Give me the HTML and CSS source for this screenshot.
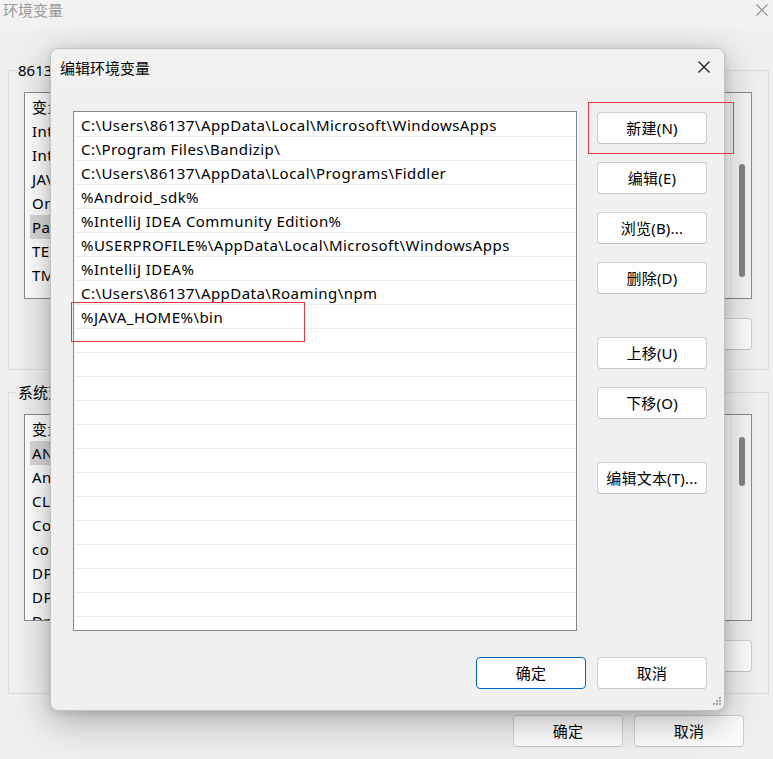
FILE: index.html
```html
<!DOCTYPE html>
<html lang="zh-CN">
<head>
<meta charset="utf-8">
<title>编辑环境变量</title>
<link rel="stylesheet" href="styles.css">
</head>
<body>
<div class="win">
  <div class="win-title">
    <span class="win-title-text">环境变量</span>
    <svg class="win-close" width="12" height="12" viewBox="0 0 12 12"><path d="M0.5 0.5 L11.5 11.5 M11.5 0.5 L0.5 11.5" stroke="#8a8a8a" stroke-width="1.1" fill="none"/></svg>
  </div>

  <div class="group group-user">
    <div class="legend">86137 的用户变量(U)</div>
    <div class="varlist">
      <div class="vl-body">
        <div class="vl-row vl-head"><span class="c1">变量</span></div>
        <div class="vl-row"><span class="c1">IntelliJ IDEA</span></div>
        <div class="vl-row"><span class="c1">IntelliJ IDEA Community Edition</span></div>
        <div class="vl-row"><span class="c1">JAVA_HOME</span></div>
        <div class="vl-row"><span class="c1">OneDrive</span></div>
        <div class="vl-row selected"><span class="c1">Path</span></div>
        <div class="vl-row"><span class="c1">TEMP</span></div>
        <div class="vl-row"><span class="c1">TMP</span></div>
      </div>
      <div class="vscroll"><div class="thumb thumb-user"></div></div>
    </div>
    <div class="group-btns">
      <button class="btn">新建(N)...</button>
      <button class="btn">编辑(E)...</button>
      <button class="btn">删除(D)</button>
    </div>
  </div>

  <div class="group group-sys">
    <div class="legend">系统变量(S)</div>
    <div class="varlist">
      <div class="vl-body">
        <div class="vl-row vl-head"><span class="c1">变量</span></div>
        <div class="vl-row selected"><span class="c1">ANDROID_HOME</span></div>
        <div class="vl-row"><span class="c1">Android_sdk</span></div>
        <div class="vl-row"><span class="c1">CLASSPATH</span></div>
        <div class="vl-row"><span class="c1">ComSpec</span></div>
        <div class="vl-row"><span class="c1">configsetroot</span></div>
        <div class="vl-row"><span class="c1">DPS_HOME</span></div>
        <div class="vl-row"><span class="c1">DPS_PATH</span></div>
        <div class="vl-row"><span class="c1">DriverData</span></div>
      </div>
      <div class="vscroll"><div class="thumb thumb-sys"></div></div>
    </div>
    <div class="group-btns">
      <button class="btn">新建(W)...</button>
      <button class="btn">编辑(I)...</button>
      <button class="btn">删除(L)</button>
    </div>
  </div>

  <div class="win-btns">
    <button class="btn">确定</button>
    <button class="btn">取消</button>
  </div>
</div>

<div class="dialog">
  <div class="dlg-title">
    <span>编辑环境变量</span>
    <svg class="dlg-close" width="12" height="12" viewBox="0 0 12 12"><path d="M0.5 0.5 L11.5 11.5 M11.5 0.5 L0.5 11.5" stroke="#1a1a1a" stroke-width="1.2" fill="none"/></svg>
  </div>
  <div class="dlg-main">
    <div class="pathlist">
      <div class="p-row">C:\Users\86137\AppData\Local\Microsoft\WindowsApps</div>
      <div class="p-row">C:\Program Files\Bandizip\</div>
      <div class="p-row">C:\Users\86137\AppData\Local\Programs\Fiddler</div>
      <div class="p-row">%Android_sdk%</div>
      <div class="p-row">%IntelliJ IDEA Community Edition%</div>
      <div class="p-row">%USERPROFILE%\AppData\Local\Microsoft\WindowsApps</div>
      <div class="p-row">%IntelliJ IDEA%</div>
      <div class="p-row">C:\Users\86137\AppData\Roaming\npm</div>
      <div class="p-row">%JAVA_HOME%\bin</div>
      <div class="p-row"></div>
      <div class="p-row"></div>
      <div class="p-row"></div>
      <div class="p-row"></div>
      <div class="p-row"></div>
      <div class="p-row"></div>
      <div class="p-row"></div>
      <div class="p-row"></div>
      <div class="p-row"></div>
      <div class="p-row"></div>
      <div class="p-row"></div>
      <div class="p-row"></div>
      <div class="p-row"></div>
    </div>
    <div class="dlg-side">
      <button class="btn">新建(N)</button>
      <button class="btn">编辑(E)</button>
      <button class="btn">浏览(B)...</button>
      <button class="btn">删除(D)</button>
      <button class="btn gap-top">上移(U)</button>
      <button class="btn">下移(O)</button>
      <button class="btn gap-top">编辑文本(T)...</button>
    </div>
  </div>
  <div class="dlg-foot">
    <button class="btn btn-default">确定</button>
    <button class="btn">取消</button>
  </div>
  <svg class="grip" width="12" height="12" viewBox="0 0 12 12">
    <rect x="9" y="1" width="2" height="2" fill="#a8a8a8"/>
    <rect x="6" y="4" width="2" height="2" fill="#a8a8a8"/>
    <rect x="9" y="4" width="2" height="2" fill="#a8a8a8"/>
    <rect x="3" y="7" width="2" height="2" fill="#a8a8a8"/>
    <rect x="6" y="7" width="2" height="2" fill="#a8a8a8"/>
    <rect x="9" y="7" width="2" height="2" fill="#a8a8a8"/>
  </svg>
</div>

<div class="mark mark-row"></div>
<div class="mark mark-new"></div>
</body>
</html>
```

FILE: styles.css
```css
* { box-sizing: border-box; }

html, body {
  margin: 0;
  padding: 0;
}

body {
  width: 773px;
  height: 759px;
  overflow: hidden;
  position: relative;
  background: #f0f0f0;
  font-family: "Noto Sans", "Noto Sans CJK SC", sans-serif;
  font-size: 15px;
  color: #000;
}

.win {
  height: 759px;
  background: #f0f0f0;
  display: flex;
  flex-direction: column;
}

.win-title {
  height: 30px;
  display: flex;
  justify-content: space-between;
  align-items: flex-start;
  padding: 0 5px 0 3px;
  background: #f2f2f2;
}

.win-title-text {
  color: #9b9b9b;
  line-height: 20px;
  font-family: "Noto Sans CJK SC", sans-serif;
}

.win-close {
  margin-top: 4px;
}

.group {
  margin: 0 4px 0 8px;
  border: 1px solid #dcdcdc;
  display: flex;
  flex-direction: column;
}

.group-user {
  margin-top: 40px;
  padding-bottom: 19px;
}

.group-sys {
  margin-top: 22px;
  padding-bottom: 21px;
}

.legend {
  align-self: flex-start;
  margin: -11px 0 0 7px;
  padding: 0 2px;
  line-height: 20px;
  height: 20px;
  background: #f0f0f0;
}

.varlist {
  margin: 12px 16px 0 15px;
  height: 207px;
  border: 1px solid #8c8c8c;
  background: #fff;
  display: flex;
  overflow: hidden;
}

.vl-body {
  flex: 1;
  overflow: hidden;
}

.vl-row {
  height: 24px;
  line-height: 24px;
  display: flex;
  padding-left: 5px;
  white-space: nowrap;
  letter-spacing: 0.45px;
}

.vl-row.vl-head {
  height: 26px;
  line-height: 28px;
  padding-left: 5px;
}

.vl-row.selected .c1 {
  background: #d9d9d9;
}

.vl-row .c1 {
  width: 290px;
  padding-left: 2px;
}

.vscroll {
  width: 21px;
  border-left: 1px solid #e6e6e6;
  background: #f6f6f6;
  position: relative;
}

.thumb {
  position: absolute;
  left: 8px;
  width: 6px;
  border-radius: 3px;
  background: #858585;
}

.thumb-user {
  top: 71px;
  height: 113px;
}

.thumb-sys {
  top: 22px;
  height: 49px;
}

.group-btns {
  display: flex;
  justify-content: flex-end;
  gap: 10px;
  margin-top: 19px;
  padding-right: 16px;
}

.btn {
  width: 110px;
  height: 32px;
  padding: 0;
  border: 1px solid #d0d0d0;
  border-bottom-color: #c4c4c4;
  border-radius: 4px;
  background: #fdfdfd;
  font-family: "Noto Sans", "Noto Sans CJK SC", sans-serif;
  font-size: 15px;
  color: #000;
  line-height: 30px;
  letter-spacing: 0.2px;
}

.win-btns {
  display: flex;
  justify-content: flex-end;
  gap: 11px;
  margin-top: 21px;
  padding-right: 29px;
}

/* dialog window on top */
.dialog {
  position: absolute;
  left: 50px;
  top: 48px;
  width: 675px;
  height: 663px;
  border: 1px solid #c2c2c2;
  border-radius: 8px;
  background: #f0f0f0;
  box-shadow: 0 10px 38px rgba(0, 0, 0, 0.30), 0 2px 8px rgba(0, 0, 0, 0.12);
  display: flex;
  flex-direction: column;
}

.dlg-title {
  height: 36px;
  display: flex;
  justify-content: space-between;
  align-items: center;
  padding: 0 14px 0 9px;
  font-family: "Noto Sans CJK SC", sans-serif;
  border-radius: 8px 8px 0 0;
  background: #f1f1f1;
}

.dlg-main {
  display: flex;
  margin-top: 26px;
  padding-left: 22px;
}

.pathlist {
  width: 504px;
  height: 520px;
  border: 1px solid #828790;
  background: #fff;
  padding-top: 1px;
  overflow: hidden;
}

.p-row {
  height: 24px;
  line-height: 25px;
  padding-left: 7px;
  border-bottom: 1px solid #ececec;
  white-space: nowrap;
  letter-spacing: 0.45px;
}

.dlg-side {
  margin-left: 20px;
  padding-top: 1px;
  display: flex;
  flex-direction: column;
  gap: 18px;
}

.dlg-side .gap-top {
  margin-top: 25px;
}

.dlg-foot {
  display: flex;
  justify-content: flex-end;
  gap: 11px;
  margin-top: 26px;
  padding-right: 17px;
}

.btn-default {
  border: 1px solid #0067c0;
}

.grip {
  position: absolute;
  right: 2px;
  bottom: 2px;
}

/* red annotation boxes */
.mark {
  position: absolute;
  border: 1px solid #e5393b;
}

.mark-row {
  left: 71px;
  top: 302px;
  width: 234px;
  height: 40px;
}

.mark-new {
  left: 588px;
  top: 102px;
  width: 146px;
  height: 52px;
}
```
